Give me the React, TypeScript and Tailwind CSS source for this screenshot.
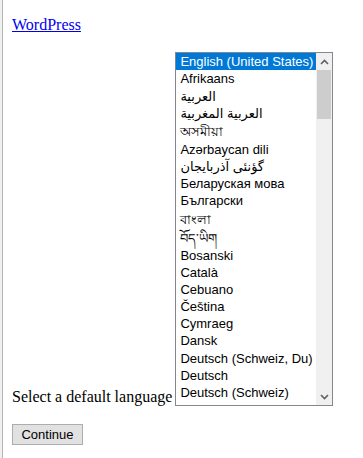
const languages: { label: string; h: number }[] = [
  { label: "English (United States)", h: 17 },
  { label: "Afrikaans", h: 17 },
  { label: "العربية", h: 18 },
  { label: "العربية المغربية", h: 17 },
  { label: "অসমীয়া", h: 19 },
  { label: "Azərbaycan dili", h: 17 },
  { label: "گؤنئی آذربایجان", h: 17 },
  { label: "Беларуская мова", h: 17 },
  { label: "Български", h: 17 },
  { label: "বাংলা", h: 20 },
  { label: "བོད་ཡིག", h: 18 },
  { label: "Bosanski", h: 17 },
  { label: "Català", h: 17 },
  { label: "Cebuano", h: 17 },
  { label: "Čeština", h: 17 },
  { label: "Cymraeg", h: 17 },
  { label: "Dansk", h: 17 },
  { label: "Deutsch (Schweiz, Du)", h: 18 },
  { label: "Deutsch", h: 17 },
  { label: "Deutsch (Schweiz)", h: 17 },
];

const sans = "font-['Liberation_Sans','Noto_Sans','DejaVu_Sans',sans-serif]";

function LanguageList() {
  return (
    <div className="flex h-[354px] w-[158px] shrink-0 border border-[#828790] bg-white">
      <div className={`min-w-0 flex-1 overflow-hidden text-[13px] text-black ${sans}`}>
        {languages.map((lang, i) => (
          <div
            key={lang.label}
            style={{ height: lang.h }}
            className={
              i === 0
                ? "flex items-center whitespace-nowrap bg-[#0078d7] px-[4px] pt-[1px] text-white"
                : "flex items-center whitespace-nowrap px-[4px] pt-[1px]"
            }
          >
            {lang.label}
          </div>
        ))}
      </div>
      <div className="flex w-[16px] shrink-0 flex-col bg-[#f0f0f0]">
        <div className="flex h-[17px] items-center justify-center">
          <svg width="9" height="6" viewBox="0 0 9 6">
            <path d="M1 5 L4.5 1.5 L8 5" fill="none" stroke="#606060" strokeWidth="1.6" />
          </svg>
        </div>
        <div className="mx-[1px] h-[49px] bg-[#cdcdcd]" />
        <div className="flex-1" />
        <div className="flex h-[17px] items-center justify-center">
          <svg width="9" height="6" viewBox="0 0 9 6">
            <path d="M1 1 L4.5 4.5 L8 1" fill="none" stroke="#606060" strokeWidth="1.6" />
          </svg>
        </div>
      </div>
    </div>
  );
}

export default function App() {
  return (
    <div className="flex h-[458px] w-[363px] bg-white font-['Liberation_Serif','DejaVu_Serif',serif] text-[16px] text-black">
      <div className="w-[3px] shrink-0 border-r border-[#b4b4b4] bg-[#f0f0f0]" />
      <div className="flex flex-col pl-[9px] pt-[16px]">
        <a href="#" className="self-start leading-[18px] text-[#0000ee] underline">
          WordPress
        </a>
        <div className="mt-[18px] flex items-end gap-[3px]">
          <label className="whitespace-nowrap leading-[18px]">Select a default language</label>
          <LanguageList />
        </div>
        <div className="mt-[16px]">
          <button
            className={`h-[21px] w-[71px] border border-[#adadad] bg-[#e1e1e1] text-[13px] text-black ${sans}`}
          >
            Continue
          </button>
        </div>
      </div>
    </div>
  );
}
